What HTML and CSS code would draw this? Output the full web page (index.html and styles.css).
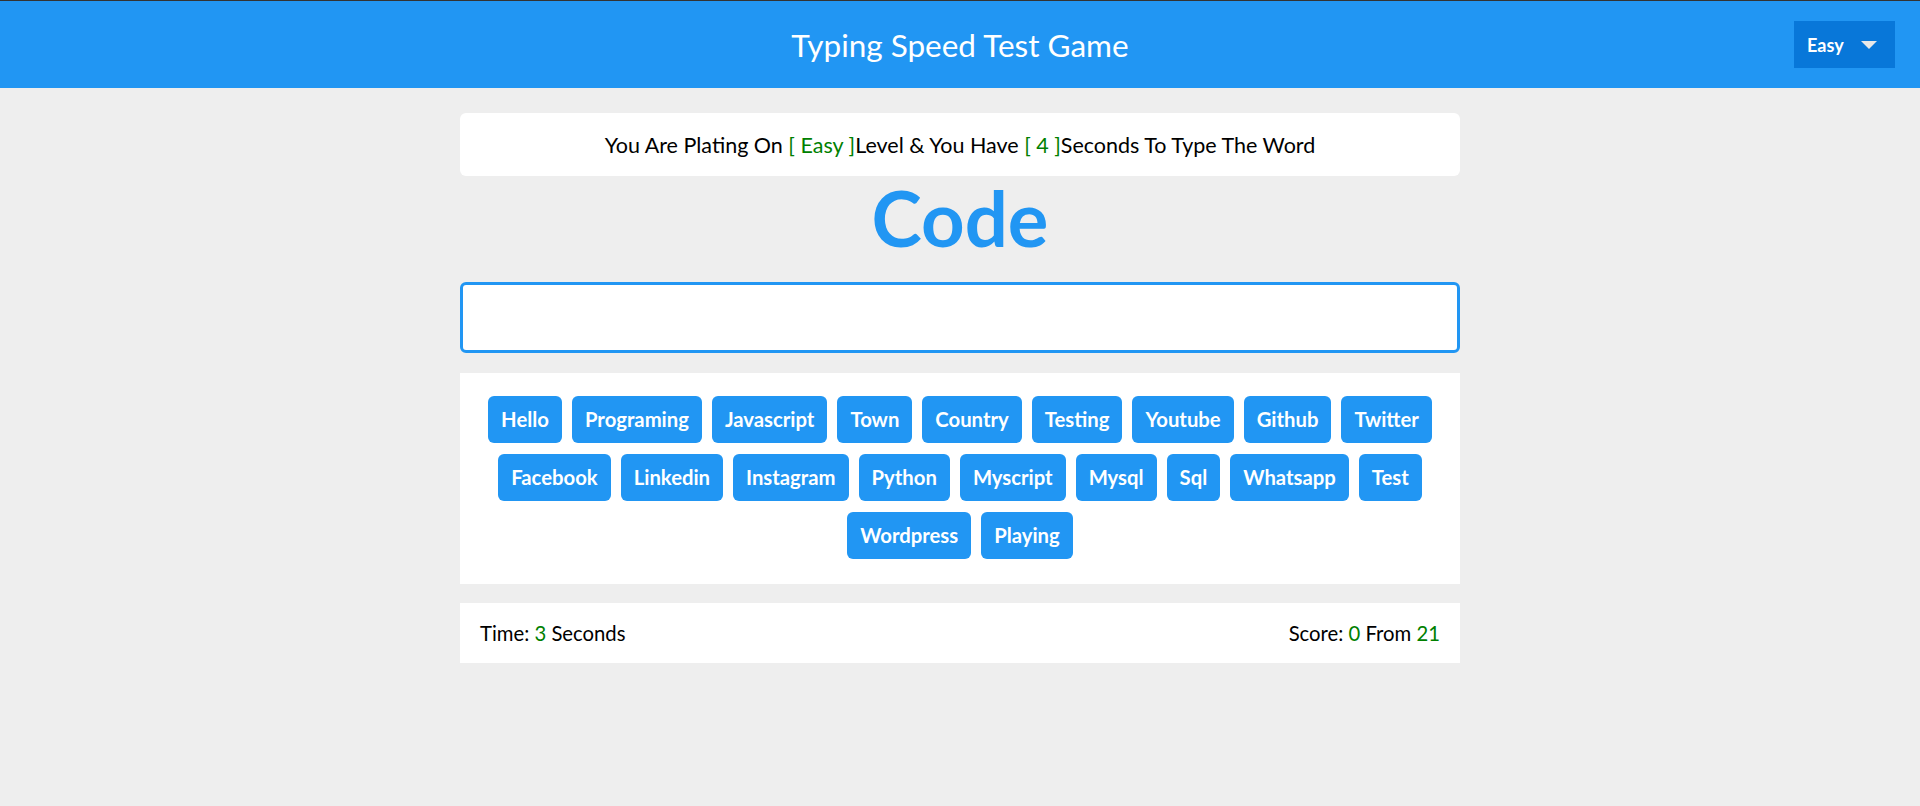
FILE: index.html
```html
<!DOCTYPE html>
<html lang="en">
<head>
<meta charset="UTF-8">
<title>Typing Speed Test Game</title>
<link rel="stylesheet" href="styles.css">
</head>
<body>
<header class="top-bar">
  <div class="top-spacer"></div>
  <h1 class="title">Typing Speed Test Game</h1>
  <div class="level-select">
    <span class="level-text">Easy</span>
    <svg class="level-caret" width="16" height="8" viewBox="0 0 16 8"><path d="M0 0 L16 0 L8 8 Z" fill="#e8e8e8"/></svg>
  </div>
</header>
<main class="game">
  <div class="message">You Are Plating On <span class="hl">[ Easy ]</span>Level &amp; You Have <span class="hl">[ 4 ]</span>Seconds To Type The Word</div>
  <div class="the-word">Code</div>
  <input class="input" type="text">
  <div class="upcoming-words">
    <span class="word">Hello</span>
    <span class="word">Programing</span>
    <span class="word">Javascript</span>
    <span class="word">Town</span>
    <span class="word">Country</span>
    <span class="word">Testing</span>
    <span class="word">Youtube</span>
    <span class="word">Github</span>
    <span class="word">Twitter</span>
    <span class="word">Facebook</span>
    <span class="word">Linkedin</span>
    <span class="word">Instagram</span>
    <span class="word">Python</span>
    <span class="word">Myscript</span>
    <span class="word">Mysql</span>
    <span class="word">Sql</span>
    <span class="word">Whatsapp</span>
    <span class="word">Test</span>
    <span class="word">Wordpress</span>
    <span class="word">Playing</span>
  </div>
  <div class="control">
    <div class="time">Time: <span class="hl">3</span> Seconds</div>
    <div class="score">Score: <span class="hl">0</span> From <span class="hl">21</span></div>
  </div>
</main>
</body>
</html>
```

FILE: styles.css
```css
* {
  box-sizing: border-box;
}

body {
  margin: 0;
  background: #eeeeee;
  font-family: Lato, "Open Sans", "Noto Sans", sans-serif;
  color: #000;
}

.top-bar {
  height: 88px;
  border-top: 1px solid #333;
  background: #2196f3;
  display: grid;
  grid-template-columns: 1fr auto 1fr;
  align-items: center;
}

.title {
  margin: 0;
  color: #fff;
  font-weight: normal;
  font-size: 31.5px;
  line-height: 40px;
}

.level-select {
  justify-self: end;
  margin-right: 25px;
  width: 101px;
  height: 47px;
  background: #0877d9;
  display: flex;
  align-items: center;
  padding-left: 13px;
  gap: 17px;
}

.level-text {
  color: #fff;
  font-weight: bold;
  font-size: 18px;
}

.level-caret {
  display: block;
}

.game {
  width: 1000px;
  margin: 25px auto 0;
}

.message {
  background: #fff;
  border-radius: 6px;
  height: 63px;
  display: flex;
  align-items: center;
  justify-content: center;
  font-size: 21.5px;
  white-space: pre;
}

.hl {
  color: #008000;
}

.the-word {
  text-align: center;
  color: #2196f3;
  font-weight: bold;
  font-size: 76px;
  line-height: 83px;
  margin-bottom: 23px;
}

.input {
  display: block;
  width: 100%;
  height: 71px;
  border: 3px solid #2196f3;
  border-radius: 6px;
  background: #fff;
  outline: none;
  font-size: 20px;
}

.upcoming-words {
  margin-top: 20px;
  background: #fff;
  padding: 23px 20px 25px;
  display: flex;
  flex-wrap: wrap;
  justify-content: center;
  gap: 11px 10px;
}

.word {
  background: #2196f3;
  color: #fff;
  font-weight: bold;
  font-size: 20.3px;
  line-height: 27px;
  padding: 10px 13px;
  border-radius: 6px;
}

.control {
  margin-top: 19px;
  background: #fff;
  height: 60px;
  padding: 0 20px;
  display: flex;
  align-items: center;
  justify-content: space-between;
  font-size: 20.3px;
}
```
